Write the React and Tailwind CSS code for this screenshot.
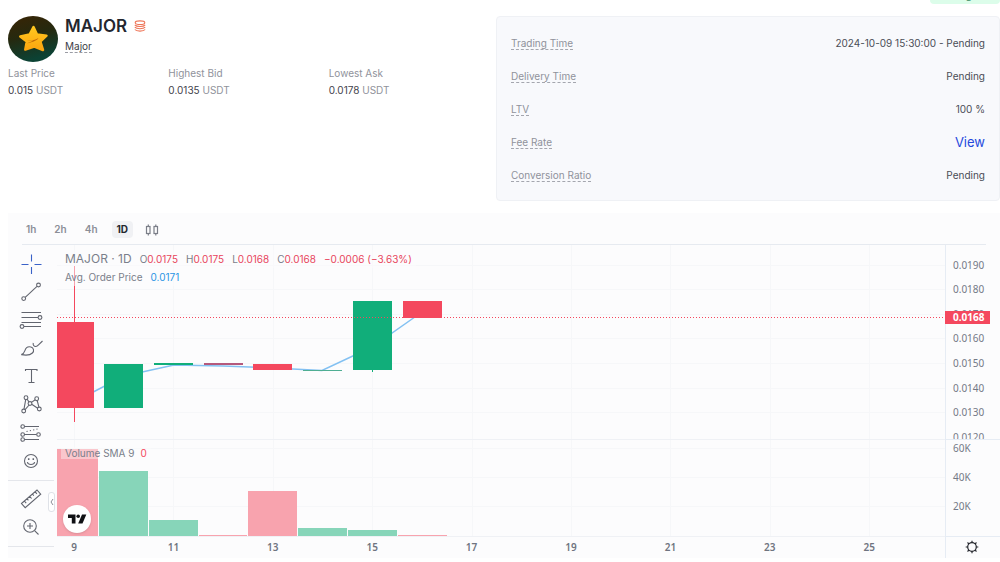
import React from 'react';

const stats = [
  { label: 'Last Price', value: '0.015' },
  { label: 'Highest Bid', value: '0.0135' },
  { label: 'Lowest Ask', value: '0.0178' },
];

const details = [
  { label: 'Trading Time', value: '2024-10-09 15:30:00 - Pending' },
  { label: 'Delivery Time', value: 'Pending' },
  { label: 'LTV', value: '100 %' },
  { label: 'Fee Rate', value: 'View', link: true },
  { label: 'Conversion Ratio', value: 'Pending' },
];

const RED = '#f4485e';
const GREEN = '#11ae7a';

// Plot units: x from the plot's left edge, y from its top edge.
const candles = [
  { x: 0, w: 37, top: 77, bottom: 163, color: RED, wick: [21, 177] },
  { x: 47, w: 39, top: 119, bottom: 163, color: GREEN },
  { x: 97, w: 39, top: 118, bottom: 120, color: GREEN },
  { x: 147, w: 39, top: 118, bottom: 120, color: '#b4597c' },
  { x: 196, w: 39, top: 119, bottom: 125, color: RED },
  { x: 246, w: 39, top: 125, bottom: 126, color: '#4fae93' },
  { x: 296, w: 39, top: 56, bottom: 125, color: GREEN, wick: [56, 127] },
  { x: 346, w: 39, top: 56, bottom: 73, color: RED },
];

const volumes = [
  { x: 0, w: 41, h: 87, up: false },
  { x: 42, w: 49, h: 65, up: true },
  { x: 92, w: 49, h: 16, up: true },
  { x: 142, w: 48, h: 1, up: false },
  { x: 191, w: 49, h: 45, up: false },
  { x: 241, w: 49, h: 8, up: true },
  { x: 291, w: 49, h: 6, up: true },
  { x: 341, w: 49, h: 1, up: false },
];

const days = [9, 11, 13, 15, 17, 19, 21, 23, 25];
const prices = ['0.0190', '0.0180', '0.0170', '0.0160', '0.0150', '0.0140', '0.0130', '0.0120'];
const volumeTicks = ['60K', '40K', '20K'];

const dayX = (i) => 17 + i * 99.4;
const priceY = (i) => 19.5 + i * 24.6;
const volumeY = (i) => 203.5 + i * 29;

const tools = [
  {
    name: 'Cross',
    active: true,
    icon: <path d="M4.5 14.5h7M17.5 14.5h7M14.5 4.5v7M14.5 17v7" />,
  },
  {
    name: 'Trend line',
    icon: (
      <>
        <path d="M8.2 19.3 20 8.4" />
        <circle cx="6.7" cy="20.6" r="1.9" />
        <circle cx="21.5" cy="7" r="1.9" />
      </>
    ),
  },
  {
    name: 'Fib retracement',
    icon: (
      <>
        <path d="M4.5 6.5H24M4.5 11.5H21M4.5 16.5H24M7 20.5H24" />
        <circle cx="23" cy="11.5" r="1.9" />
        <circle cx="5" cy="20.5" r="1.9" />
      </>
    ),
  },
  {
    name: 'Brush',
    icon: (
      <>
        <path d="M4.3 20.6c2.2-.6 3-2.2 3.6-4 .9-2.7 3.3-4.3 6-3.6 2.8.8 3.6 3.9 1.5 6-2.6 2.6-7.3 2.3-11.1 1.6z" />
        <path d="M16.3 9c-.6 1.8.6 3.6 2.6 3.5 1.2 0 1.9-.8 2.6-1.6L25.5 7" />
      </>
    ),
  },
  {
    name: 'Text',
    icon: <path d="M8.5 9V7.5h11.5V9M14.5 7.5v13M11.5 20.5h6" />,
  },
  {
    name: 'XABCD pattern',
    icon: (
      <>
        <path d="M7 19.2 8.7 9.6M10.2 9.2l1.7 2.7M8.1 19.6l4-4.6M14.5 12.4l3.7-2.7M20.2 10.5l1.7 6.6M14.7 14.3l6 4" />
        <circle cx="9" cy="7.7" r="1.9" />
        <circle cx="6.7" cy="21" r="1.9" />
        <circle cx="13" cy="13.5" r="1.9" />
        <circle cx="19.7" cy="8.7" r="1.9" />
        <circle cx="22.3" cy="19" r="1.9" />
      </>
    ),
  },
  {
    name: 'Long position',
    icon: (
      <>
        <path d="M7.5 8.5H22M7.5 16.5h12M7.5 21.5H22" />
        <path d="M9.5 13.5l11-2.5" strokeDasharray="1.2 2.2" />
        <circle cx="5.7" cy="8.5" r="1.8" />
        <circle cx="5.7" cy="16.5" r="1.8" />
        <circle cx="21.5" cy="16.5" r="1.8" />
        <circle cx="5.7" cy="21.5" r="1.8" />
      </>
    ),
  },
  {
    name: 'Icons',
    icon: (
      <>
        <circle cx="14" cy="15" r="6.5" />
        <path d="M10.3 16.2c.8 3 6.6 3 7.4 0" />
        <path d="M11.7 12.3v1.6M16.3 12.3v1.6" strokeWidth="1.5" />
      </>
    ),
  },
];

const lowerTools = [
  {
    name: 'Measure',
    icon: (
      <path d="M4.5 18.5 20 5l3.7 4.2L8.2 22.7zM7.3 16l1.9 2.2M10 13.7l1.4 1.6M12.7 11.3l1.9 2.2M15.4 9l1.4 1.6M18 6.7l1.9 2.2" />
    ),
  },
  {
    name: 'Zoom in',
    icon: (
      <>
        <circle cx="13" cy="13" r="6.3" />
        <path d="M17.6 17.6 21.5 21.5M13 10v6M10 13h6" />
      </>
    ),
  },
];

function ToolButton({ name, icon, active }) {
  return (
    <button type="button" aria-label={name} className={active ? 'size-7 text-[#3a62c8]' : 'size-7 text-[#62656f]'}>
      <svg viewBox="0 0 28 28" className="size-7" fill="none" stroke="currentColor" strokeWidth="1.1">
        {icon}
      </svg>
    </button>
  );
}

function CoinLogo() {
  return (
    <svg viewBox="0 0 50 46" className="h-[46px] w-[50px]" role="img" aria-label="Major coin">
      <defs>
        <linearGradient id="coin" x1="0" y1="0" x2="0.3" y2="1">
          <stop offset="0" stopColor="#3a2404" />
          <stop offset="0.5" stopColor="#25290f" />
          <stop offset="1" stopColor="#0c4234" />
        </linearGradient>
        <linearGradient id="star" x1="0" y1="0" x2="0" y2="1">
          <stop offset="0" stopColor="#ffc71f" />
          <stop offset="1" stopColor="#fda50f" />
        </linearGradient>
      </defs>
      <ellipse cx="25" cy="23" rx="25" ry="23" fill="url(#coin)" />
      <path
        d="M25.5 11 29 18.5 38.5 19.7 32.3 25.5 35 34 26.3 30.5 17.3 33.5 18.8 25.5 12.3 20.5 21.6 18.5z"
        fill="url(#star)"
        stroke="url(#star)"
        strokeWidth="2.5"
        strokeLinejoin="round"
      />
      <path d="M19 24c4.5 1 8 .2 11.5-2-2 3.5-7 3.8-11.5 5.5 1.5-1 5-2.2 6-3-2 .3-4 .2-6-.5z" fill="#c46c08" />
    </svg>
  );
}

function Header() {
  return (
    <div className="pr-[7px] pl-2">
      <div className="flex gap-[7px]">
        <CoinLogo />
        <div>
          <div className="flex items-center gap-[7px]">
            <h1 className="text-[17px] leading-5 font-semibold text-[#23262f]">MAJOR</h1>
            <svg viewBox="0 0 12 12" className="size-3" fill="none" stroke="#ee7558" strokeWidth="1.1" aria-hidden="true">
              <ellipse cx="6" cy="2.7" rx="4.8" ry="1.8" />
              <path d="M.8 4.8c1 1.3 2.5 1.7 5.2 1.7s4.2-.4 5.2-1.7M.8 7.2c1 1.2 2.5 1.6 5.2 1.6s4.2-.4 5.2-1.6M.8 9.5c1 1.2 2.5 1.6 5.2 1.6s4.2-.4 5.2-1.6" />
            </svg>
          </div>
          <a
            href="#major"
            className="mt-1 block w-fit border-b border-dashed border-[#9a9ca4] text-[10px] leading-3 text-[#3a3d46]"
          >
            Major
          </a>
        </div>
      </div>
      <dl className="mt-[3px] grid grid-cols-3 text-[10px] text-[#8f929b]">
        {stats.map((s) => (
          <div key={s.label}>
            <dt className="leading-4">{s.label}</dt>
            <dd className="leading-[18px]">
              <span className="text-[#3f424b]">{s.value}</span> USDT
            </dd>
          </div>
        ))}
      </dl>
    </div>
  );
}

function Details() {
  return (
    <dl className="rounded border border-[#eff1f5] bg-[#f8f9fc] px-[14px] pt-[10px] pb-2">
      {details.map((d) => (
        <div key={d.label} className="flex h-[33px] items-center justify-between text-[10px]">
          <dt className="border-b border-dashed border-[#a4a6ae] leading-3 text-[#8f929b]">{d.label}</dt>
          <dd className="text-[#4a4d56]">
            {d.link ? (
              <a href="#fees" className="text-[13px] text-[#2549dc]">
                {d.value}
              </a>
            ) : (
              d.value
            )}
          </dd>
        </div>
      ))}
    </dl>
  );
}

function Intervals() {
  const base = 'h-[17px] rounded-sm px-1 leading-[17px]';
  return (
    <div className="mx-[14px] flex h-8 items-center gap-[10px] border-b border-[#e6eaf0] pt-[2px] text-[10px] font-semibold text-[#8b8e97]">
      <button type="button" className={base}>1h</button>
      <button type="button" className={base}>2h</button>
      <button type="button" className={base}>4h</button>
      <button type="button" className="h-[17px] rounded-sm bg-[#f0f1f4] px-[5px] leading-[17px] font-bold text-[#23262f]">
        1D
      </button>
      <button type="button" aria-label="Chart type" className="px-[2px]">
        <svg viewBox="0 0 14 12" className="h-3 w-[14px]" fill="none" stroke="#7b7e88" strokeWidth="1.2">
          <rect x="1.5" y="2.5" width="3.5" height="7" />
          <rect x="9" y="2.5" width="3.5" height="7" />
          <path d="M3.3 .5v2M3.3 9.5v2M10.8 .5v2M10.8 9.5v2" />
        </svg>
      </button>
    </div>
  );
}

function Plot() {
  return (
    <svg className="h-[313px] w-full" role="img" aria-label="MAJOR daily price and volume">
      <g stroke="#f6f7f9">
        {days.map((d, i) => (
          <line key={d} x1={Math.round(dayX(i)) + 0.5} x2={Math.round(dayX(i)) + 0.5} y1="0" y2="291" />
        ))}
        {prices.slice(0, 7).map((p, i) => (
          <line key={p} x1="0" x2="100%" y1={Math.round(priceY(i)) + 0.5} y2={Math.round(priceY(i)) + 0.5} />
        ))}
        {volumeTicks.map((v, i) => (
          <line key={v} x1="0" x2="100%" y1={volumeY(i)} y2={volumeY(i)} />
        ))}
      </g>
      <path d="M0 194.5H4000M0 291.5H4000" stroke="#eff1f5" />
      {volumes.map((v) => (
        <rect key={v.x} x={v.x} y={291 - v.h} width={v.w} height={v.h} fill={v.up ? '#87d5b9' : '#f8a3ae'} />
      ))}
      <polyline
        points="17,157 67,131 117,120 166,121 216,123 265,125.5 315,102 365,67"
        fill="none"
        stroke="#83c1f2"
        strokeWidth="1.5"
      />
      {candles.map((c) => (
        <g key={c.x} fill={c.color}>
          {c.wick && <rect x={c.x === 0 ? 17 : c.x + 19} y={c.wick[0]} width="1" height={c.wick[1] - c.wick[0]} />}
          <rect x={c.x} y={c.top} width={c.w} height={c.bottom - c.top} />
        </g>
      ))}
      <line x1="0" x2="100%" y1="72.5" y2="72.5" stroke={RED} strokeDasharray="1 2" />
      <g fill="#6f7480" fontSize="10" fontWeight="600" textAnchor="middle">
        {days.map((d, i) => (
          <text key={d} x={dayX(i)} y="306">
            {d}
          </text>
        ))}
      </g>
    </svg>
  );
}

function Axis() {
  return (
    <div className="relative w-[55px] shrink-0">
      <svg className="h-[313px] w-full" role="img" aria-label="Price and volume scale">
        <clipPath id="price-pane">
          <rect width="55" height="194" />
        </clipPath>
        <g fill="#747986" fontSize="10">
          <g clipPath="url(#price-pane)">
            {prices.map((p, i) => (
              <text key={p} x="8" y={Math.round(priceY(i)) + 4}>
                {p}
              </text>
            ))}
          </g>
          {volumeTicks.map((v, i) => (
            <text key={v} x="8" y={volumeY(i) + 3.5}>
              {v}
            </text>
          ))}
        </g>
        <path d="M.5 0V313M0 194.5H55M0 291.5H55" stroke="#e6ecf4" />
        <rect y="66" width="45" height="13" fill={RED} />
        <text x="8" y="76" fontSize="10" fontWeight="700" fill="#fff">
          0.0168
        </text>
      </svg>
      <button type="button" aria-label="Chart settings" className="absolute bottom-1 left-5 size-[14px]">
        <svg viewBox="0 0 14 14" className="size-[14px]" fill="none" stroke="#24262d" strokeWidth="1.2">
          <circle cx="7" cy="7" r="4.3" />
          <path d="M7 .7v2M7 11.3v2M.7 7h2M11.3 7h2M2.5 2.5l1.4 1.4M10.1 10.1l1.4 1.4M2.5 11.5l1.4-1.4M10.1 3.9l1.4-1.4" />
        </svg>
      </button>
    </div>
  );
}

function Legend() {
  const ohlc = [
    ['O', '0.0175'],
    ['H', '0.0175'],
    ['L', '0.0168'],
    ['C', '0.0168'],
  ];
  return (
    <div className="absolute top-[5px] left-1 text-[#7a7f8b]">
      <div className="flex w-fit items-baseline gap-2 bg-[#fcfcfd]/50 px-1 text-[10px] leading-[18px]">
        <span className="text-[12px]">MAJOR · 1D</span>
        {ohlc.map(([k, v]) => (
          <span key={k}>
            {k}
            <span className="text-[#e8455c]">{v}</span>
          </span>
        ))}
        <span className="text-[#e8455c]">−0.0006 (−3.63%)</span>
      </div>
      <div className="flex w-fit gap-2 bg-[#fcfcfd]/50 px-1 text-[10px] leading-[18px]">
        <span>Avg. Order Price</span>
        <span className="text-[#2a94e4]">0.0171</span>
      </div>
    </div>
  );
}

function Chart() {
  return (
    <section className="mt-3 ml-2 bg-[#fcfcfd]">
      <Intervals />
      <div className="flex">
        <div className="relative mr-[3px] flex w-[46px] shrink-0 flex-col pt-[5px]">
          <div className="flex flex-col items-center border-b border-[#e4e6eb] pb-[6px]">
            {tools.map((t) => (
              <ToolButton key={t.name} {...t} />
            ))}
          </div>
          <div className="flex flex-col items-center border-b border-[#e4e6eb] pt-1 pb-[5px]">
            {lowerTools.map((t) => (
              <ToolButton key={t.name} {...t} />
            ))}
          </div>
          <button
            type="button"
            aria-label="Hide drawing toolbar"
            className="absolute top-[247px] left-10 flex h-5 w-[7px] items-center justify-center rounded-[3px] border border-[#dfe2e8] bg-white"
          >
            <svg viewBox="0 0 4 8" className="h-2 w-1" fill="none" stroke="#8b8e97">
              <path d="M3 1 1 4l2 3" />
            </svg>
          </button>
        </div>
        <div className="relative min-w-0 flex-1">
          <div className="font-['Noto_Sans',sans-serif]">
            <Plot />
          </div>
          <Legend />
          <div className="absolute top-[202px] left-1 flex gap-[6px] bg-[#fcfcfd]/40 px-1 text-[10px] leading-3 text-[#7a7f8b]">
            <span>Volume SMA 9</span>
            <span className="text-[#f4485e]">0</span>
          </div>
          <a
            href="#tradingview"
            aria-label="TradingView"
            className="absolute top-[260px] left-[6px] flex size-7 items-center justify-center rounded-full bg-white shadow-sm"
          >
            <svg viewBox="0 0 20 10" className="h-[10px] w-5" fill="#101114">
              <path d="M1 .5h7.5V9.5H4.8V4H1z" />
              <circle cx="11.2" cy="2.3" r="1.8" />
              <path d="M15 .5h4.3L15.5 9.5h-4.3z" />
            </svg>
          </a>
        </div>
        <div className="flex font-['Noto_Sans',sans-serif]">
          <Axis />
        </div>
      </div>
    </section>
  );
}

export default function App() {
  return (
    <main className="bg-white font-['Inter','Noto_Sans',sans-serif]">
      <div className="flex h-1 items-end justify-end overflow-hidden">
        <span className="w-[70px] rounded-b bg-[#dcfdea] pt-2 pr-[28px] pb-[3px] text-right text-[10px] leading-3 text-[#3d8b66]">
          Trading
        </span>
      </div>
      <div className="mt-3 grid grid-cols-[496fr_504fr]">
        <Header />
        <Details />
      </div>
      <Chart />
    </main>
  );
}
